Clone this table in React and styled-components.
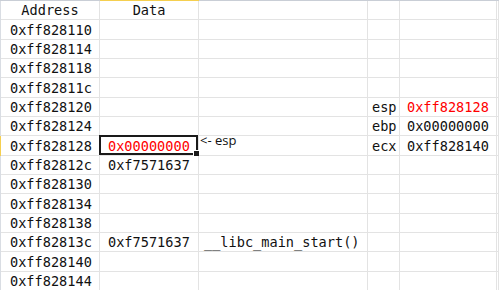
import React from "react";
import styled, { createGlobalStyle } from "styled-components";

const Global = createGlobalStyle`
  html, body { margin: 0; padding: 0; background: #fff; overflow: hidden; }
  #root { width: 499px; height: 290px; overflow: hidden; }
`;

const Sheet = styled.div`
  display: grid;
  grid-template-columns: 1px 99px 99px 169px 32px 97px 2px;
  grid-template-rows: 1px 19.33px;
  grid-auto-rows: 19.33px;
  width: 499px;
  font-family: "DejaVu Sans Mono", "Liberation Mono", monospace;
  font-size: 13.6px;
  color: #111;
`;

const ColEdge = styled.div`
  background: ${(p) => (p.$active ? "#f5cf4f" : "#c9ced6")};
`;

const RowEdge = styled.div`
  background: ${(p) => (p.$active ? "#f5cf4f" : "#d9dde3")};
`;

const Cell = styled.div`
  position: relative;
  box-sizing: border-box;
  border-right: 1px solid #e3e3e3;
  border-bottom: 1px solid #e3e3e3;
  display: flex;
  align-items: flex-end;
  justify-content: ${(p) => (p.$center ? "center" : "flex-start")};
  padding-left: ${(p) => (p.$center ? 0 : p.$pad || 0)}px;
  padding-bottom: 1px;
  line-height: 15px;
  white-space: nowrap;
  color: ${(p) => (p.$red ? "#ff0000" : "#111")};
`;

const Selection = styled.div`
  position: absolute;
  left: -1px;
  top: -1px;
  right: 0px;
  bottom: 0px;
  border: 2px solid #1a1a1a;
  pointer-events: none;
`;

const Handle = styled.div`
  position: absolute;
  right: -4px;
  bottom: -4px;
  width: 5px;
  height: 5px;
  background: #1a1a1a;
  border: 1px solid #fff;
`;

const Note = styled.span`
  position: absolute;
  left: 1px;
  top: -4px;
  font-family: "Open Sans", "Liberation Sans", sans-serif;
  font-size: 13px;
  line-height: 16px;
  color: #111;
`;

const pads = [9, 8, 5, 4, 7, 0];

const rows = [
  { a: "0xff828110" },
  { a: "0xff828114" },
  { a: "0xff828118" },
  { a: "0xff82811c" },
  { a: "0xff828120", d: "esp", e: "0xff828128", eRed: true },
  { a: "0xff828124", d: "ebp", e: "0x00000000" },
  { a: "0xff828128", b: "0x00000000", bRed: true, sel: true, note: "<- esp", d: "ecx", e: "0xff828140" },
  { a: "0xff82812c", b: "0xf7571637" },
  { a: "0xff828130" },
  { a: "0xff828134" },
  { a: "0xff828138" },
  { a: "0xff82813c", b: "0xf7571637", c: "__libc_main_start()" },
  { a: "0xff828140" },
  { a: "0xff828144" },
];

export default function App() {
  return (
    <>
      <Global />
      <Sheet>
        <ColEdge />
        <ColEdge />
        <ColEdge $active />
        <ColEdge />
        <ColEdge />
        <ColEdge />
        <ColEdge />

        <RowEdge />
        <Cell $center>Address</Cell>
        <Cell $center>Data</Cell>
        <Cell />
        <Cell />
        <Cell />
        <Cell />

        {rows.map((r, i) => (
          <React.Fragment key={i}>
            <RowEdge $active={r.sel} />
            <Cell $pad={pads[0]}>{r.a}</Cell>
            <Cell $pad={pads[1]} $red={r.bRed}>
              {r.b}
              {r.sel && (
                <Selection>
                  <Handle />
                </Selection>
              )}
            </Cell>
            <Cell $pad={pads[2]}>
              {r.c}
              {r.note && <Note>{r.note}</Note>}
            </Cell>
            <Cell $pad={pads[3]}>{r.d}</Cell>
            <Cell $pad={pads[4]} $red={r.eRed}>{r.e}</Cell>
            <Cell />
          </React.Fragment>
        ))}
      </Sheet>
    </>
  );
}
